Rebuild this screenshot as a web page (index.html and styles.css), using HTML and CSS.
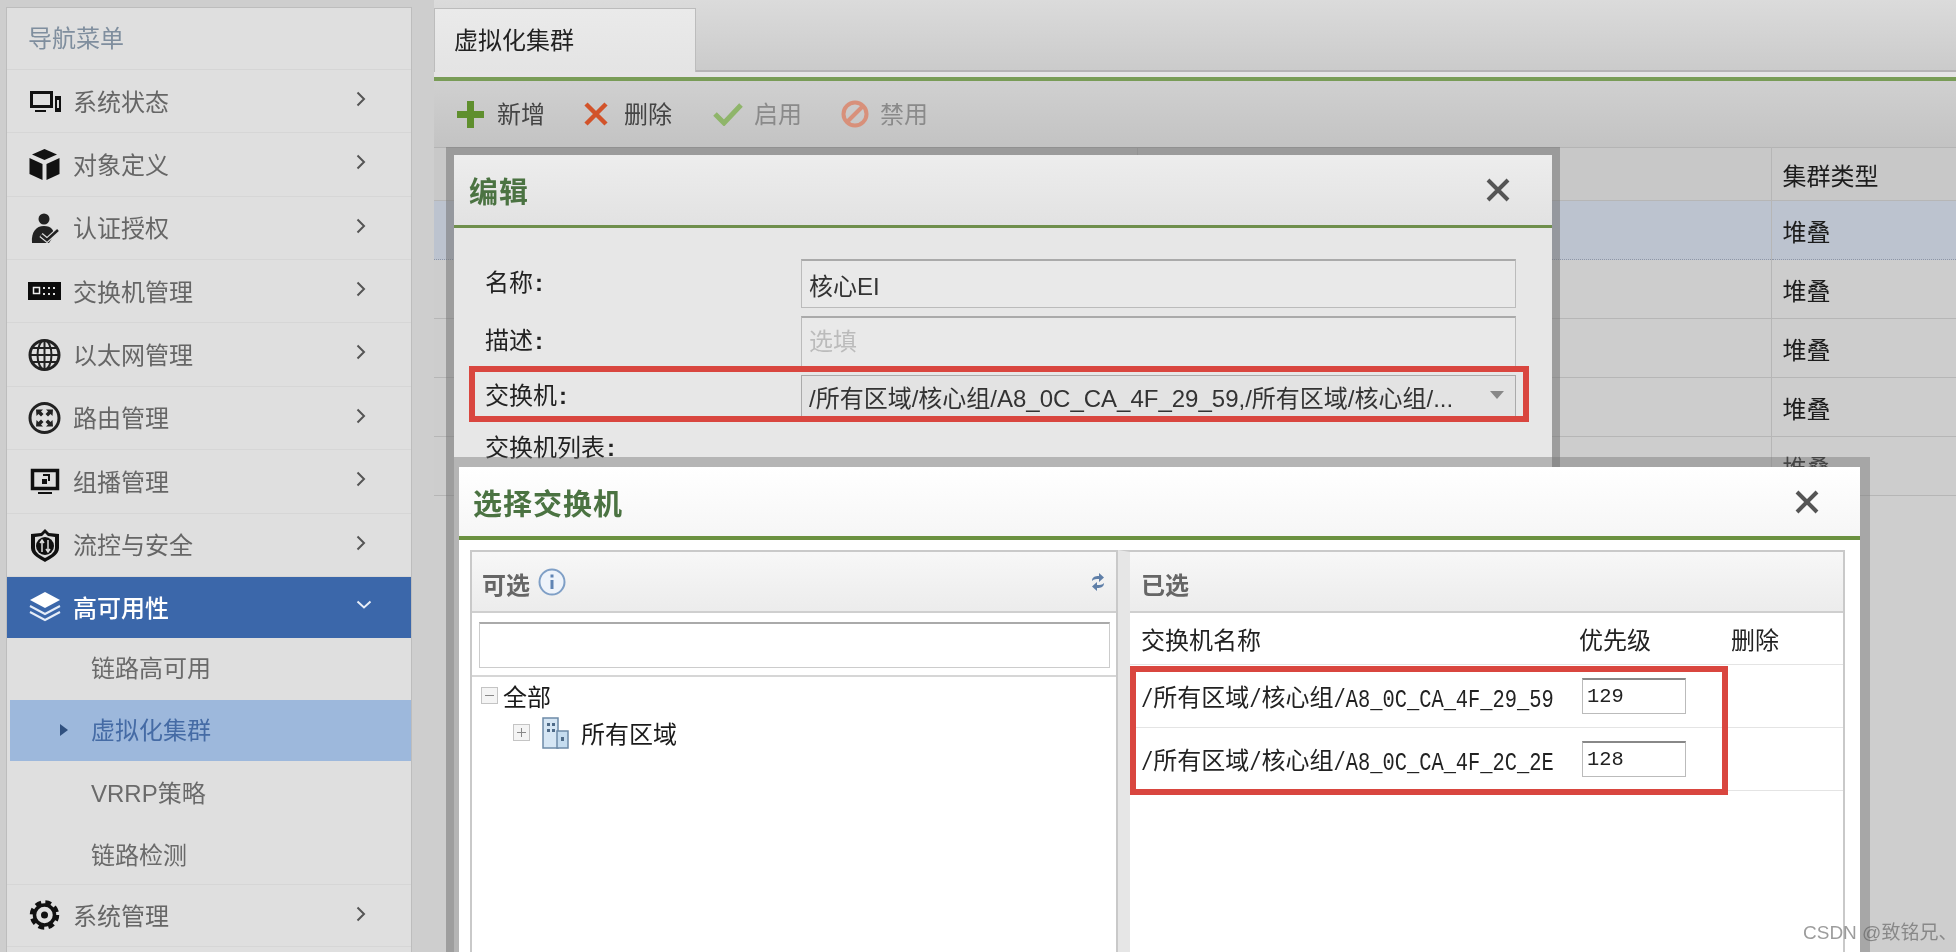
FILE: index.html
```html
<!DOCTYPE html>
<html lang="zh-CN">
<head>
<meta charset="utf-8">
<title>虚拟化集群</title>
<link rel="stylesheet" href="styles.css">
</head>
<body>
<div class="page">
  <aside class="sidebar">
    <div class="side-title">导航菜单</div>
    <div class="nav-row"><svg class="nav-ico" viewBox="0 0 34 34"><rect x="3.5" y="8.5" width="20" height="14" fill="none" stroke="#111" stroke-width="3"/><rect x="7" y="26" width="11" height="2" fill="#111"/><rect x="27" y="12" width="6" height="16" fill="#111"/><rect x="29" y="16" width="2" height="8" fill="#ddd"/></svg><span>系统状态</span><svg class="chev" viewBox="0 0 10 16"><path d="M1.5 1.5 8 8 1.5 14.5" fill="none" stroke="#555" stroke-width="2"/></svg></div>
    <div class="nav-row"><svg class="nav-ico" viewBox="0 0 34 34"><path d="M16.5 1 29 6.5 16.5 12 4 6.500Z" fill="#111"/><path d="M1.500 10 14.500 16V32L1.500 26Z M31.500 10 18.500 16V32L31.500 26Z" fill="#111"/></svg><span>对象定义</span><svg class="chev" viewBox="0 0 10 16"><path d="M1.5 1.5 8 8 1.5 14.5" fill="none" stroke="#555" stroke-width="2"/></svg></div>
    <div class="nav-row"><svg class="nav-ico" viewBox="0 0 34 34"><circle cx="16" cy="8" r="5.500" fill="#222"/><path d="M4 32C3 21 8 15 16 15s10 5 10 9l-5 8Z" fill="#222"/><path d="M13 24l6 5 11-10" fill="none" stroke="#ddd" stroke-width="5"/><path d="M13 24l6 5 11-10" fill="none" stroke="#222" stroke-width="2.500"/></svg><span>认证授权</span><svg class="chev" viewBox="0 0 10 16"><path d="M1.5 1.5 8 8 1.5 14.5" fill="none" stroke="#555" stroke-width="2"/></svg></div>
    <div class="nav-row"><svg class="nav-ico" viewBox="0 0 34 34"><rect x="0" y="8" width="33" height="18" fill="#0c0c0c"/><rect x="5.500" y="13.500" width="6" height="6" fill="none" stroke="#eee" stroke-width="1.500"/><g fill="#ddd"><rect x="15" y="13" width="2" height="2"/><rect x="20" y="13" width="2" height="2"/><rect x="25" y="13" width="2" height="2"/><rect x="15" y="19" width="2" height="2"/><rect x="20" y="19" width="2" height="2"/><rect x="25" y="19" width="2" height="2"/></g></svg><span>交换机管理</span><svg class="chev" viewBox="0 0 10 16"><path d="M1.5 1.5 8 8 1.5 14.5" fill="none" stroke="#555" stroke-width="2"/></svg></div>
    <div class="nav-row"><svg class="nav-ico" viewBox="0 0 34 34"><circle cx="16.500" cy="17" r="14.500" fill="none" stroke="#222" stroke-width="3"/><ellipse cx="16.500" cy="17" rx="7" ry="14.500" fill="none" stroke="#222" stroke-width="2"/><path d="M16.500 3V31M2 17H31M4 10H29M4 24H29" stroke="#222" stroke-width="2"/></svg><span>以太网管理</span><svg class="chev" viewBox="0 0 10 16"><path d="M1.5 1.5 8 8 1.5 14.5" fill="none" stroke="#555" stroke-width="2"/></svg></div>
    <div class="nav-row"><svg class="nav-ico" viewBox="0 0 34 34"><circle cx="16.500" cy="17" r="14.500" fill="none" stroke="#222" stroke-width="3"/><path d="M8 8.500h7l-2 2 2.500 2.500-2.500 2.500-2.500-2.500-2 2ZM25 8.500h-7l2 2-2.500 2.500 2.500 2.500 2.500-2.500 2 2ZM8 25.500h7l-2-2 2.500-2.500-2.500-2.500-2.500 2.500-2-2ZM25 25.500h-7l2-2-2.500-2.500 2.500-2.500 2.500 2.500 2-2Z" fill="#222"/></svg><span>路由管理</span><svg class="chev" viewBox="0 0 10 16"><path d="M1.5 1.5 8 8 1.500 14.500" fill="none" stroke="#555" stroke-width="2"/></svg></div>
    <div class="nav-row"><svg class="nav-ico" viewBox="0 0 34 34"><rect x="4.500" y="6.500" width="25" height="18" fill="none" stroke="#111" stroke-width="3.500"/><rect x="10" y="28" width="14" height="2" fill="#111"/><rect x="14" y="15" width="5" height="5" fill="#111"/><path d="M15 11h6v6" fill="none" stroke="#111" stroke-width="2"/></svg><span>组播管理</span><svg class="chev" viewBox="0 0 10 16"><path d="M1.5 1.5 8 8 1.5 14.500" fill="none" stroke="#555" stroke-width="2"/></svg></div>
    <div class="nav-row"><svg class="nav-ico" viewBox="0 0 34 34"><path d="M17 1 21 5 31 6V20C31 27 22 31 17 34 12 31 3 27 3 20V6L13 5Z" fill="#111"/><path d="M17 5 20 8 27 9V20C27 25 21 28 17 30 13 28 7 25 7 20V9L14 8Z" fill="#ddd"/><circle cx="17" cy="18" r="9" fill="#111"/><path d="M14 12V24M20 12V24M12 15l2-3 2 3M18 21l2 3 2-3" fill="none" stroke="#ddd" stroke-width="1.500"/></svg><span>流控与安全</span><svg class="chev" viewBox="0 0 10 16"><path d="M1.5 1.5 8 8 1.5 14.500" fill="none" stroke="#555" stroke-width="2"/></svg></div>
    <div class="nav-row nav-active"><svg class="nav-ico" viewBox="0 0 34 34"><path d="M17 2 32 10 17 18 2 10Z" fill="#fff"/><path d="M2 16 17 24 32 16M2 22 17 30 32 22" fill="none" stroke="#e6edf8" stroke-width="2"/></svg><span>高可用性</span><svg class="chev-down" viewBox="0 0 16 10"><path d="M1.500 1.500 8 7.500 14.500 1.500" fill="none" stroke="#e8eef8" stroke-width="2"/></svg></div>
    <div class="sub-row">链路高可用</div>
    <div class="sub-row sub-active"><i class="tri"></i>虚拟化集群</div>
    <div class="sub-row sub-low">VRRP策略</div>
    <div class="sub-row sub-low sub-end">链路检测</div>
    <div class="nav-row nav-last"><svg class="nav-ico" viewBox="0 0 34 34"><circle cx="16.500" cy="17" r="12" fill="none" stroke="#111" stroke-width="5.500" stroke-dasharray="5.500 4"/><circle cx="16.500" cy="17" r="10" fill="none" stroke="#111" stroke-width="3.500"/><circle cx="16.500" cy="17" r="3.500" fill="#111"/></svg><span>系统管理</span><svg class="chev" viewBox="0 0 10 16"><path d="M1.5 1.5 8 8 1.5 14.500" fill="none" stroke="#555" stroke-width="2"/></svg></div>
  </aside>

  <main class="main">
    <div class="tabbar"><div class="tab">虚拟化集群</div></div>
    <div class="tabstrip"></div>
    <div class="toolbar">
      <div class="tool"><svg class="tool-plus" viewBox="0 0 27 27"><path d="M13.500 0V27M0 13.500H27" stroke="#5f8f2e" stroke-width="7"/></svg><span>新增</span></div>
      <div class="tool"><svg class="tool-x" viewBox="0 0 24 24"><path d="M2 2 22 22M22 2 2 22" stroke="#d2532a" stroke-width="4.500"/></svg><span>删除</span></div>
      <div class="tool tool-off"><svg class="tool-check" viewBox="0 0 30 24"><path d="M2 12 11 21 28 3" fill="none" stroke="#8fb56a" stroke-width="5"/></svg><span>启用</span></div>
      <div class="tool tool-off"><svg class="tool-ban" viewBox="0 0 28 28"><circle cx="14" cy="14" r="11.500" fill="none" stroke="#d8907a" stroke-width="4"/><path d="M6 22 22 6" stroke="#d8907a" stroke-width="4"/></svg><span>禁用</span></div>
    </div>
    <table class="grid">
      <colgroup><col class="col-a"><col class="col-b"><col></colgroup>
      <thead><tr><th></th><th></th><th>集群类型</th></tr></thead>
      <tbody>
        <tr class="selected"><td></td><td></td><td>堆叠</td></tr>
        <tr><td></td><td></td><td>堆叠</td></tr>
        <tr><td></td><td></td><td>堆叠</td></tr>
        <tr><td></td><td></td><td>堆叠</td></tr>
        <tr><td></td><td></td><td>堆叠</td></tr>
      </tbody>
    </table>
  </main>

  <section class="dialog edit">
    <header class="dlg-head">
      <h2>编辑</h2>
      <svg class="dlg-close" viewBox="0 0 24 24"><path d="M2 2 22 22M22 2 2 22" stroke="#555" stroke-width="4"/></svg>
    </header>
    <div class="form">
      <label>名称<b>:</b></label><input class="field" value="核心EI">
      <label>描述<b>:</b></label><input class="field" placeholder="选填">
      <label>交换机<b>:</b></label>
      <div class="combo"><span class="combo-text">/所有区域/核心组/A8_0C_CA_4F_29_59,/所有区域/核心组/...</span><i class="combo-arrow"></i></div>
      <label>交换机列表<b>:</b></label><div></div>
    </div>
  </section>
  <div class="mark mark-combo"></div>

  <section class="dialog pick">
    <header class="dlg-head dlg-head-white">
      <h2>选择交换机</h2>
      <svg class="dlg-close" viewBox="0 0 24 24"><path d="M2 2 22 22M22 2 2 22" stroke="#555" stroke-width="4"/></svg>
    </header>
    <div class="split">
      <div class="panel">
        <div class="panel-head"><span>可选</span>
          <svg class="info" viewBox="0 0 28 28"><circle cx="14" cy="14" r="12.500" fill="#eef3fa" stroke="#7f9fc6" stroke-width="2"/><rect x="12.500" y="12" width="3" height="9" fill="#5f84b4"/><rect x="12.500" y="6.500" width="3" height="3" fill="#5f84b4"/></svg>
          <svg class="refresh" viewBox="0 0 14 18"><path d="M1 8C1 4 4 3 8 3V0L13 4.500 8 9V6C5 6 3 6 1 8ZM13 10C13 14 10 15 6 15V18L1 13.500 6 9V12C9 12 11 12 13 10Z" fill="#5f7fa8"/></svg>
        </div>
        <div class="search"><input class="search-input"></div>
        <div class="tree">
          <div class="node"><i class="box box-minus"></i><span>全部</span></div>
          <div class="node node-child"><i class="box box-plus"></i>
            <svg class="building" viewBox="0 0 27 32"><rect x="1" y="1" width="15" height="30" fill="#d6e6f4" stroke="#6d8ba8" stroke-width="1.500"/><rect x="15" y="14" width="11" height="17" fill="#c5dcef" stroke="#6d8ba8" stroke-width="1.500"/><g fill="#4f6b88"><rect x="5" y="6" width="3" height="3"/><rect x="10" y="6" width="3" height="3"/><rect x="5" y="12" width="3" height="3"/><rect x="10" y="12" width="3" height="3"/><rect x="19" y="20" width="3" height="4"/></g></svg>
            <span>所有区域</span></div>
        </div>
      </div>
      <div class="panel panel-right">
        <div class="panel-head"><span>已选</span></div>
        <table class="chosen">
          <colgroup><col class="col-name"><col class="col-pri"><col></colgroup>
          <thead><tr><th>交换机名称</th><th>优先级</th><th>删除</th></tr></thead>
          <tbody>
            <tr><td><span class="m">/</span>所有区域<span class="m">/</span>核心组<span class="m">/A8_0C_CA_4F_29_59</span></td><td><input class="pri" value="129"></td><td></td></tr>
            <tr><td><span class="m">/</span>所有区域<span class="m">/</span>核心组<span class="m">/A8_0C_CA_4F_2C_2E</span></td><td><input class="pri" value="128"></td><td></td></tr>
          </tbody>
        </table>
      </div>
    </div>
  </section>
  <div class="mark mark-list"></div>
  <div class="watermark">CSDN @致铭兄、</div>
</div>
</body>
</html>
```

FILE: styles.css
```css
* { box-sizing: border-box; }
html, body { margin: 0; padding: 0; background: #cfcfcf; }
body { font-family: "Liberation Sans", "Noto Sans CJK SC", sans-serif; font-size: 24px; color: #222; }
.page { position: relative; display: flex; width: 1956px; height: 952px; overflow: hidden; background: #cecece; filter: blur(0.55px); }

/* sidebar */
.sidebar { width: 404px; margin: 8px 0 0 7px; height: 950px; flex: none; background: #dfdfdf; box-shadow: 0 0 0 1px #bdbdbd; color: #666; }
.side-title { height: 62px; padding: 11px 0 0 21px; line-height: 40px; color: #7f8e9e; border-bottom: 1px solid #d5d5d5; }
.nav-row { display: flex; align-items: center; height: 63.37px; padding-left: 21px; border-bottom: 1px solid #d6d6d6; position: relative; }
.nav-row span { margin-bottom: 2px; }
.nav-ico { width: 34px; height: 34px; margin-right: 11px; flex: none; }
.chev { position: absolute; left: 349px; top: 21px; width: 10px; height: 16px; }
.chev-down { position: absolute; left: 349px; top: 23px; width: 16px; height: 10px; }
.nav-active { height: 61px; background: #3b67aa; color: #fff; font-weight: 500; border-bottom: 0; }
.sub-row { position: relative; height: 62px; padding-left: 84px; line-height: 62px; color: #6a6a6a; }
.sub-active { margin-left: 3px; padding-left: 81px; background: #9db8dc; color: #456ba5; height: 61px; line-height: 62px; }
.sub-low { line-height: 65px; }
.sub-end { height: 61px; }
.tri { position: absolute; left: 50px; top: 24px; border-left: 8px solid #30507f; border-top: 6px solid transparent; border-bottom: 6px solid transparent; }
.nav-last { height: 63px; border-top: 1px solid #d6d6d6; }

/* main */
.main { flex: 1; margin-left: 23px; display: flex; flex-direction: column; min-width: 0; }
.tabbar { height: 72px; padding-top: 8px; background: linear-gradient(#dbdbdb, #cbcbcb); border-bottom: 2px solid #b5b3b5; }
.tab { width: 262px; height: 64px; padding: 14px 0 0 19px; line-height: 36px; color: #222; background: linear-gradient(#eaeaea, #e4e4e4); border: 1px solid #bcbcbc; border-bottom: 0; }
.tabstrip { height: 9px; background: #e6e4e6; border-bottom: 4px solid #799c57; }
.toolbar { display: flex; align-items: center; height: 66px; padding: 0 0 0 23px; background: linear-gradient(#d0d0d0, #c3c3c3); color: #444; }
.tool { display: flex; align-items: center; }
.tool span { line-height: 36px; margin-top: 2px; }
.tool-off { color: #8a8a8a; }
.tool-plus { width: 27px; height: 27px; margin-right: 13px; }
.tool-x { width: 24px; height: 24px; margin: 0 16px 0 39px; }
.tool-check { width: 30px; height: 24px; margin: 0 11px 0 41px; }
.tool-ban { width: 28px; height: 28px; margin: 0 11px 0 39px; }

.grid { width: 100%; border-collapse: collapse; table-layout: fixed; background: #cdcdcd; border-top: 1px solid #b4b4b4; }
.grid .col-a { width: 703px; }
.grid .col-b { width: 634px; }
.grid th, .grid td { padding: 0 0 0 11px; font-weight: 400; text-align: left; color: #1c1c1c; border-bottom: 1px solid #b6b6b6; border-right: 1px solid #b6b6b6; }
.grid th { height: 53px; background: #c8c8c8; }
.grid td { height: 59px; }
.grid th:last-child, .grid td:last-child { border-right: 0; }
.grid .selected td { background: #bcc3cf; border-bottom: 1px dotted #8e96a6; }

/* dialogs */
.dialog { position: absolute; background: #fff; background-clip: padding-box; }
.dlg-head { display: flex; align-items: center; justify-content: space-between; height: 73px; border-bottom: 3px solid #6f8f4c; background: linear-gradient(#ededed, #e2e2e2); }
.dlg-head h2 { margin: 0; font-size: 29px; font-weight: 700; color: #4b7342; letter-spacing: 1px; }
.dlg-close { width: 24px; height: 24px; flex: none; }

.edit { left: 446px; top: 147px; width: 1114px; height: 820px; border: 8px solid rgba(110, 110, 110, 0.5); background-color: #e7e7e7; }
.edit .dlg-head { padding: 0 42px 0 15px; }
.form { display: grid; grid-template-columns: 316px 715px; grid-template-rows: 49px 51px 43px 44px; row-gap: 8px; padding: 31px 0 0 31px; align-items: center; }
.form label { color: #222; padding-bottom: 6px; }
.form label b { font-weight: 700; margin-left: 2px; }
.field { width: 715px; height: 100%; padding: 0 7px; font: inherit; color: #333; background: #e9e9e9; border: 1px solid #bbb; border-top: 2px solid #aaa; outline: 0; }
.field::placeholder { color: #bbb; opacity: 1; }
.combo { position: relative; height: 43px; padding: 5px 0 0 7px; border: 1px solid #aaa; background: #e3e3e3; color: #333; white-space: nowrap; line-height: 36px; }
.combo-arrow { position: absolute; right: 11px; top: 15px; border-top: 8px solid #888; border-left: 7px solid transparent; border-right: 7px solid transparent; }

.mark { position: absolute; border: 6px solid #d9463f; }
.mark-combo { left: 469px; top: 366px; width: 1060px; height: 56px; }
.mark-list { left: 1130px; top: 666px; width: 598px; height: 129px; }

.pick { left: 454px; top: 457px; width: 1416px; height: 560px; border: solid rgba(120, 120, 120, 0.45); border-width: 10px 10px 0 5px; }
.pick .dlg-head { height: 73px; padding: 0 41px 0 14px; border-bottom: 4px solid #6b9140; }
.dlg-head-white { background: linear-gradient(#fff, #f6f6f6) !important; }
.split { display: grid; grid-template-columns: 648px 727px; padding: 10px 0 0 11px; align-items: stretch; height: 470px; }
.panel { border: solid #c9c9c9; border-width: 2px 2px 0; background: #fff; }
.panel-right { border-left: 12px solid #e6e6e6; }
.panel-right .panel-head { padding-left: 11px; }
.panel-head { display: flex; align-items: center; height: 61px; padding-left: 10px; font-weight: 700; color: #666; background: linear-gradient(#f7f7f7, #ececec); border-bottom: 2px solid #cfcfcf; position: relative; }
.panel-head span { margin-top: 3px; }
.info { width: 28px; height: 28px; margin-left: 8px; }
.refresh { position: absolute; right: 11px; top: 21px; width: 14px; height: 18px; }
.search { height: 64px; padding: 9px 6px 9px 7px; border-bottom: 2px solid #d6d6d6; }
.search-input { display: block; width: 100%; height: 46px; background: #fff; border: 1px solid #ccc; border-top: 2px solid #aaa; outline: 0; }
.tree { padding-left: 9px; color: #1a1a1a; }
.node { display: flex; align-items: center; height: 37px; }
.node-child { padding-left: 32px; }
.box { position: relative; width: 17px; height: 17px; border: 1px solid #c4c4c4; background: #f4f4f4; flex: none; margin-right: 5px; }
.box-minus::before, .box-plus::before { content: ""; position: absolute; left: 3px; right: 3px; top: 7px; height: 1px; background: #888; }
.box-plus::after { content: ""; position: absolute; top: 3px; bottom: 3px; left: 7px; width: 1px; background: #888; }
.node-child .box { margin-right: 12px; }
.building { width: 27px; height: 32px; margin-right: 12px; flex: none; }

.chosen { width: 100%; border-collapse: collapse; table-layout: fixed; color: #222; }
.chosen .col-name { width: 449px; }
.chosen .col-pri { width: 152px; }
.chosen th, .chosen td { padding: 0; text-align: left; font-weight: 400; border-bottom: 1px solid #e4e4e4; white-space: nowrap; }
.chosen th { height: 51px; }
.chosen td { height: 63px; }
.chosen th:first-child, .chosen td:first-child { padding-left: 11px; }
.chosen .m { display: inline-block; font-family: "Liberation Mono", monospace; font-size: 20.400px; transform: scaleY(1.25); }
.pri { display: block; width: 104px; height: 36px; margin-left: 3px; padding: 0 0 0 4px; font-family: "Liberation Mono", monospace; font-size: 20.400px; color: #222; background: #fff; border: 1px solid #bbb; border-top: 2px solid #888; outline: 0; }

.watermark { position: absolute; left: 1803px; top: 920px; font-size: 19px; line-height: 26px; color: rgba(90, 90, 90, 0.6); white-space: nowrap; }
```
